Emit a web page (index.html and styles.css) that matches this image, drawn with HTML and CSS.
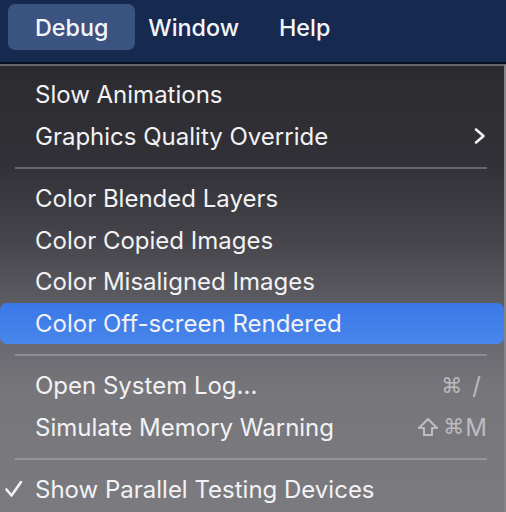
FILE: index.html
```html
<!DOCTYPE html>
<html>
<head>
<meta charset="utf-8">
<link rel="stylesheet" href="styles.css">
</head>
<body>
<div class="screen">
  <div class="menubar">
    <div class="bar-item active">Debug</div>
    <div class="bar-item window">Window</div>
    <div class="bar-item help">Help</div>
  </div>
  <div class="menu">
    <div class="row"><span class="label">Slow Animations</span></div>
    <div class="row"><span class="label">Graphics Quality Override</span>
      <svg class="chevron" width="14" height="18" viewBox="0 0 14 18"><path d="M3 2.5 L10.5 9 L3 15.5" fill="none" stroke="#f2f2f4" stroke-width="2.6" stroke-linecap="round" stroke-linejoin="round"/></svg>
    </div>
    <div class="sep"></div>
    <div class="row"><span class="label">Color Blended Layers</span></div>
    <div class="row"><span class="label">Color Copied Images</span></div>
    <div class="row"><span class="label">Color Misaligned Images</span></div>
    <div class="row selected"><span class="label">Color Off-screen Rendered</span></div>
    <div class="sep"></div>
    <div class="row"><span class="label">Open System Log...</span><span class="shortcut"><span class="cmd">⌘</span><span class="slash">/</span></span></div>
    <div class="row"><span class="label">Simulate Memory Warning</span><span class="shortcut"><svg class="shift" width="22" height="20" viewBox="0 0 22 20"><path d="M11 2 L20 11 L15 11 L15 18 L7 18 L7 11 L2 11 Z" fill="none" stroke="currentColor" stroke-width="2" stroke-linejoin="round"/></svg><span class="cmd">⌘</span><span class="key">M</span></span></div>
    <div class="sep"></div>
    <div class="row"><svg class="check" width="20" height="18" viewBox="0 0 20 18"><path d="M2.5 9.5 L7.5 15.5 L17 2" fill="none" stroke="#f2f2f4" stroke-width="2.6" stroke-linecap="round" stroke-linejoin="round"/></svg><span class="label">Show Parallel Testing Devices</span></div>
  </div>
</div>
</body>
</html>
```
FILE: styles.css
```css
html, body {
  margin: 0;
  padding: 0;
}
body {
  width: 506px;
  height: 512px;
  overflow: hidden;
  background: #7b7a7f;
  font-family: Inter, "Noto Sans", "DejaVu Sans", sans-serif;
  -webkit-font-smoothing: antialiased;
}
.screen {
  width: 506px;
  height: 512px;
  display: flex;
  flex-direction: column;
}
.menubar {
  height: 62px;
  flex: none;
  background: #162a50;
  border-bottom: 2px solid #0a1020;
  display: flex;
  align-items: flex-start;
  padding-left: 8px;
}
.bar-item {
  color: #f4f5f8;
  font-size: 23.3px;
  font-weight: 500;
  height: 46px;
  margin-top: 4px;
  display: flex;
  align-items: center;
}
.bar-item.active {
  background: #3b5380;
  border-radius: 7px;
  padding: 0 27px;
}
.bar-item.window {
  margin-left: 13px;
}
.bar-item.help {
  margin-left: 40px;
}
.menu {
  flex: 1;
  border-top: 2px solid #67666b;
  border-right: 2px solid #86858a;
  padding-top: 8px;
  background: linear-gradient(to bottom, #2c2b30 0px, #323137 100px, #46454b 175px, #64636a 255px, #77767b 325px, #7b7a7f 447px);
  display: flex;
  flex-direction: column;
}
.row {
  height: 41.5px;
  flex: none;
  display: flex;
  align-items: center;
  position: relative;
  padding-left: 35px;
  padding-right: 17px;
  color: #f2f2f4;
  font-size: 24px;
  font-weight: 400;
}
.row.selected {
  background: linear-gradient(to bottom, #3a78e8, #4886eb);
  border-radius: 7px;
}
.label {
  flex: 1;
  white-space: nowrap;
}
.chevron {
  flex: none;
}
.sep {
  height: 21px;
  flex: none;
  display: flex;
  align-items: center;
  padding: 0 17px 0 15px;
}
.sep::before {
  content: "";
  flex: 1;
  height: 2px;
  background: rgba(200, 200, 206, 0.35);
}
.shortcut {
  display: flex;
  align-items: center;
  color: rgba(235, 235, 240, 0.6);
  font-size: 24px;
}
.cmd {
  font-family: "DejaVu Sans", sans-serif;
  font-size: 21px;
}
.slash {
  margin-left: 10px;
  margin-right: 6px;
}
.shift {
  margin-right: 4px;
}
.key {
  margin-left: 1px;
}
.check {
  position: absolute;
  left: 4px;
  top: 11px;
}
```
